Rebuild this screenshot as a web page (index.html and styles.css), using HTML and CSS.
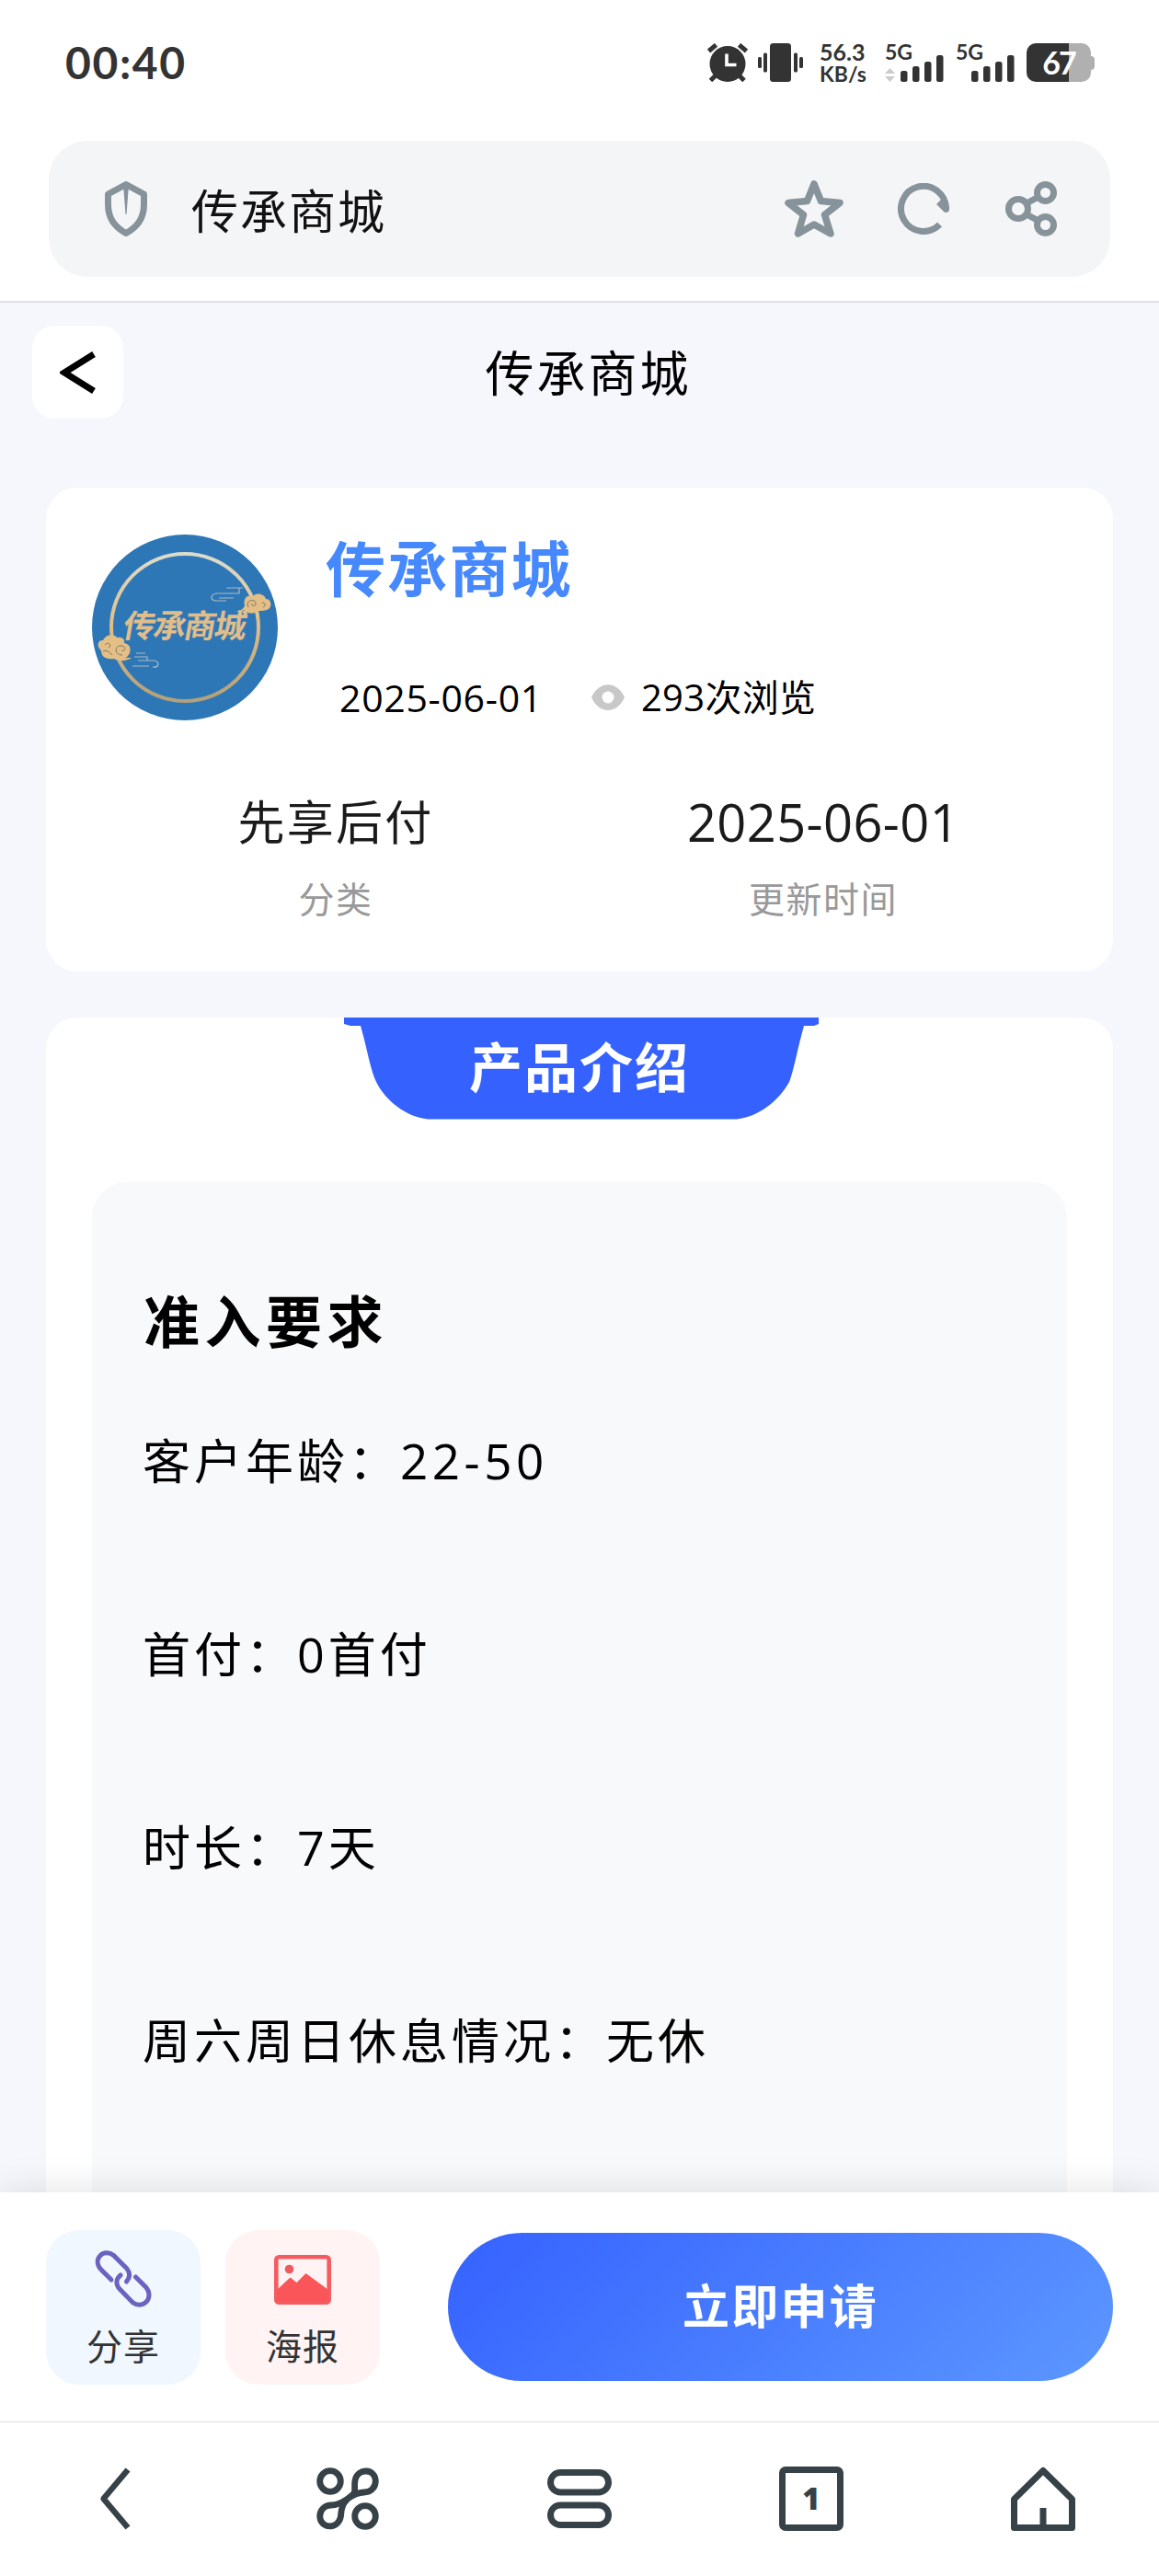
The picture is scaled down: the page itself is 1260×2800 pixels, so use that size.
FILE: index.html
```html
<!doctype html>
<html lang="zh-CN">
  <head>
    <meta charset="UTF-8" />
    <meta name="viewport" content="width=device-width, initial-scale=1.0" />
    <title>传承商城</title>
    <link rel="stylesheet" href="styles.css" />
  </head>
  <body>
    <div class="status-bar">
      <span class="clock">00:40</span>
      <div class="status-icons">
        <svg class="alarm" width="44" height="42" viewBox="0 0 44 42">
          <g fill="none" stroke="#333" stroke-width="5">
            <path d="M1.500 8.500 L9.500 1.800 M34.500 1.800 L42.500 8.500" />
            <path d="M9.500 34.500 L3.500 40.500 M34 34.500 L40 40.500" />
          </g>
          <circle cx="22" cy="22.500" r="19.500" fill="#333" />
          <path d="M21 11.500 V23.500 H31.500" fill="none" stroke="#fff" stroke-width="3.600" />
        </svg>
        <svg class="vibrate" width="50" height="42" viewBox="0 0 50 42" fill="#333">
          <rect x="13" y="0" width="23" height="42" rx="3.500" />
          <rect x="0" y="15" width="4" height="12" rx="1.500" />
          <rect x="6" y="10.500" width="4" height="21" rx="1.500" />
          <rect x="39" y="10.500" width="4" height="21" rx="1.500" />
          <rect x="45" y="15" width="4" height="12" rx="1.500" />
        </svg>
        <div class="speed"><span>56.3</span><span class="unit">KB/s</span></div>
        <div class="signal">
          <span class="net">5G</span>
          <svg width="64" height="42" viewBox="0 0 64 42" fill="#333">
            <path d="M0 33 L5.500 27 L11 33 Z M0 36 L5.500 42 L11 36 Z" fill="#ccc" />
            <rect x="17" y="30" width="7.500" height="12" rx="2.500" />
            <rect x="30" y="25" width="7.500" height="17" rx="2.500" />
            <rect x="43" y="20" width="7.500" height="22" rx="2.500" />
            <rect x="56" y="13" width="7.500" height="29" rx="2.500" />
          </svg>
        </div>
        <div class="signal second">
          <span class="net">5G</span>
          <svg width="64" height="42" viewBox="0 0 64 42" fill="#333">
            <rect x="17" y="30" width="7.500" height="12" rx="2.500" />
            <rect x="30" y="25" width="7.500" height="17" rx="2.500" />
            <rect x="43" y="20" width="7.500" height="22" rx="2.500" />
            <rect x="56" y="13" width="7.500" height="29" rx="2.500" />
          </svg>
        </div>
        <div class="battery">
          <div class="battery-body">67</div>
          <div class="battery-tip"></div>
        </div>
      </div>
    </div>

    <div class="address">
      <div class="address-box">
        <svg class="shield" width="46" height="60" viewBox="0 0 46 60">
          <path d="M23 3.500 L42.500 14 V25 C42.500 40 36 49 23 56.500 C10 49 3.500 40 3.500 25 V14 Z" fill="none" stroke="#87939a" stroke-width="7" stroke-linejoin="round" />
          <path d="M20 4 H26 L23.500 36 H22.500 Z" fill="#87939a" />
        </svg>
        <span class="address-title">传承商城</span>
        <svg class="star" width="64" height="62" viewBox="0 0 64 62">
          <path d="M32 4 L39.500 22.500 L60 24.500 L43.500 37.500 L50 58 L32 48 L14.500 58 L20.500 37.500 L4 24.500 L24.500 22.500 Z" fill="none" stroke="#87939a" stroke-width="7.500" stroke-linejoin="round" />
        </svg>
        <svg class="reload" width="56" height="56" viewBox="0 0 56 56">
          <path d="M45.500 45 A24.500 24.500 0 1 1 52.500 28" fill="none" stroke="#87939a" stroke-width="7" />
          <path d="M42 23 L49 16 C53 17 56 22 56 29 C55.500 32 52 33 50 31 Z" fill="#87939a" />
        </svg>
        <svg class="nodes" width="56" height="60" viewBox="0 0 56 60" fill="none" stroke="#87939a" stroke-width="7">
          <circle cx="14" cy="30" r="10.500" />
          <circle cx="43.500" cy="12.500" r="9" />
          <circle cx="43.500" cy="47.500" r="9" />
          <path d="M23 24 L36 17 M23 36 L36 43" />
        </svg>
      </div>
    </div>

    <main class="page">
      <header class="page-header">
        <button class="back-btn">
          <svg width="40" height="46" viewBox="0 0 40 46">
            <path d="M37 3 L5 23 L37 43" fill="none" stroke="#000" stroke-width="7" />
          </svg>
        </button>
        <h1>传承商城</h1>
      </header>

      <section class="card shop">
        <div class="shop-top">
          <svg class="shop-logo" width="202" height="202" viewBox="0 0 202 202">
            <defs>
              <linearGradient id="gold" x1="0" y1="0" x2="0" y2="1">
                <stop offset="0" stop-color="#dcdccb" />
                <stop offset="0.500" stop-color="#e0bd84" />
                <stop offset="1" stop-color="#b39f78" />
              </linearGradient>
            </defs>
            <circle cx="101" cy="101" r="101" fill="#2e77b6" />
            <circle cx="101" cy="101" r="80" fill="none" stroke="url(#gold)" stroke-width="4" />
            <!-- 右上祥云 -->
            <path d="M155 83 C160 84 165 81 166 77 C164 69 169 65 175 67 C179 62 188 65 189 70 C195 70 196 78 192 81 C186 84 182 82 180 84 C173 87 167 85 165 82 C162 84 158 84 155 83 Z" fill="#e3be86" />
            <path d="M170 79 C166 71 178 69 178 75 C178 79 173 78 174 75 M185 74 C189 74 189 78 186 79" fill="none" stroke="#7c7a60" stroke-width="1" />
            <path d="M164 58 H146 M137 64 H160 V58 M137 64 C128 64 128 72 135 72 H146 M138 69 H154" fill="none" stroke="#a9bcc0" stroke-width="1.200" />
            <!-- 左下祥云 -->
            <path d="M10 126 C4 121 7 114 12 115 C15 108 25 108 27 112 C33 111 36 114 35 118 C43 119 43 128 39 132 C37 135 32 134 43 134 C37 138 29 138 24 135 C17 136 10 134 10 126 Z" fill="#e3be86" />
            <path d="M33 131 C24 131 24 120 32 121 C38 122 36 128 32 126 M14 120 C18 116 22 120 18 123 M12 127 C16 125 19 128 22 131" fill="none" stroke="#7c7a60" stroke-width="1" />
            <path d="M48 129 H58 M46 133 H60 V137 H50 M60 137 H68 C74 138 73 145 66 144 M44 143 H62" fill="none" stroke="#a9bcc0" stroke-width="1.200" />
            <text class="logo-text" x="34" y="112" textLength="134" fill="#e0bd8a" transform="translate(18 0) skewX(-10)">传承商城</text>
          </svg>
          <div class="shop-info">
            <h2>传承商城</h2>
            <div class="shop-meta">
              <span>2025-06-01</span>
              <svg class="eye" width="36" height="28" viewBox="0 0 36 28">
                <path d="M0 14 C8 -4.500 28 -4.500 36 14 C28 32.500 8 32.500 0 14 Z" fill="#c8c8c8" />
                <circle cx="18" cy="14" r="6.500" fill="#fff" />
              </svg>
              <span class="views">293次浏览</span>
            </div>
          </div>
        </div>
        <div class="shop-stats">
          <div class="stat">
            <div class="stat-value">先享后付</div>
            <div class="stat-label">分类</div>
          </div>
          <div class="stat">
            <div class="stat-value date">2025-06-01</div>
            <div class="stat-label">更新时间</div>
          </div>
        </div>
      </section>

      <section class="card intro">
        <div class="ribbon">
          <svg class="ribbon-bg" width="518" height="112" viewBox="0 0 518 112">
            <path d="M1 0 H517 V7 L512 9 H501 L497 24 C493 40 489 60 485 70 C474 90 452 108 428 110.500 H92 C68 108 46 90 36 70 C31 60 27 40 23 24 L19 9 H8 L1 7 Z" fill="#3562ff" />
          </svg>
          <span>产品介绍</span>
        </div>
        <div class="intro-box">
          <h3>准入要求</h3>
          <p>客户年龄：<span class="range">22-50</span></p>
          <p>首付：0首付</p>
          <p>时长：7天</p>
          <p>周六周日休息情况：无休</p>
        </div>
      </section>
    </main>

    <footer class="action-bar">
      <button class="action share">
        <svg width="62" height="62" viewBox="0 0 62 62" fill="none" stroke="#6b63bf" stroke-width="5" stroke-linecap="round">
          <path d="M18 32 L6.500 20.500 C-3 9 10 -2.500 20.500 5.500 L35 20 C39 25 38 30 34.500 34" />
          <path d="M44.500 29 L56 40.500 C65 52 52 65 41 56.500 L27 42 C22.500 37 23 31 28 27" />
        </svg>
        <span>分享</span>
      </button>
      <button class="action poster">
        <svg width="62" height="54" viewBox="0 0 62 54">
          <rect x="2.300" y="2.300" width="57.400" height="49.400" rx="3" fill="none" stroke="#f45c60" stroke-width="4.600" />
          <circle cx="16.500" cy="15.500" r="4.800" fill="#ee5a5f" />
          <path d="M3 38 L17.500 24.500 L24.500 30 L34.500 20 L59 38 V51 H3 Z" fill="#fa5558" />
        </svg>
        <span>海报</span>
      </button>
      <button class="apply-btn">立即申请</button>
    </footer>

    <nav class="browser-nav">
      <a class="nav-item back">
        <svg width="34" height="68" viewBox="0 0 34 68">
          <path d="M31 2.500 L4.500 34 L31 65.500" fill="none" stroke="#374248" stroke-width="6.500" stroke-linejoin="round" />
        </svg>
      </a>
      <a class="nav-item">
        <svg width="68" height="68" viewBox="0 0 68 68" fill="none" stroke="#374248" stroke-width="6.800">
          <circle cx="15" cy="15" r="11.300" />
          <circle cx="53" cy="53" r="11.300" />
          <path d="M41.500 26.500 C42 22 41 20 42 14 C45 0 64 1 64.300 15 C64 23 58 27 52 27 C46 27 41 29 34 34 C30 38 27 42 26.500 53 C24 68 4 67 3.700 53 C4 45 10 41 16 41 C22 41 27 39 34 34 C38 31 41 28 41.500 26.500" stroke-linejoin="round" />
        </svg>
      </a>
      <a class="nav-item">
        <svg width="70" height="64" viewBox="0 0 70 64" fill="none" stroke="#374248" stroke-width="7">
          <rect x="3.500" y="3.500" width="63" height="21.500" rx="10.700" />
          <rect x="3.500" y="39" width="63" height="21.500" rx="10.700" />
        </svg>
      </a>
      <a class="nav-item"><span class="tab-count">1</span></a>
      <a class="nav-item">
        <svg width="70" height="70" viewBox="0 0 70 70" fill="none" stroke="#374248" stroke-width="7" stroke-linejoin="round">
          <path d="M35 4.500 L66.500 35.500 V66.500 H3.500 V35.500 Z" />
          <path d="M35 45 V66" />
        </svg>
      </a>
    </nav>
  </body>
</html>
```
FILE: styles.css
```css
* {
  box-sizing: border-box;
}

body {
  margin: 0;
  height: 2800px;
  display: flex;
  flex-direction: column;
  overflow: hidden;
  background-color: #fff;
  color: #000;
  font-family: "Open Sans", "Noto Sans CJK SC", sans-serif;
}

h1,
h2,
h3,
p {
  margin: 0;
}

button {
  border: none;
  padding: 0;
  font-family: inherit;
}

svg {
  display: block;
  flex: none;
}

/* 系统状态栏 */
.status-bar {
  height: 153px;
  flex: none;
  display: flex;
  justify-content: space-between;
  align-items: flex-start;
  padding: 47px 70px 0 71px;
  color: #333;
}

.clock {
  font-family: Lato, sans-serif;
  font-size: 48px;
  font-weight: 700;
  line-height: 42px;
  letter-spacing: 1.600px;
}

.status-icons {
  display: flex;
  height: 42px;
  font-family: Lato, sans-serif;
  font-weight: 700;
}

.vibrate {
  margin-left: 11px;
}

.speed {
  width: 51px;
  margin-left: 17px;
  display: flex;
  flex-direction: column;
  font-size: 25px;
  line-height: 24px;
  margin-top: -3px;
  white-space: nowrap;
}

.unit {
  font-size: 23px;
}

.signal {
  position: relative;
  margin-left: 20px;
}

.signal.second {
  margin-left: 13px;
}

.net {
  position: absolute;
  left: 0;
  top: -5px;
  font-size: 23px;
  line-height: 28px;
}

.battery {
  display: flex;
  align-items: center;
  margin-left: 13px;
}

.battery-body {
  width: 70px;
  height: 42px;
  border-radius: 10px;
  background: linear-gradient(to right, #333 46px, #b0b0b0 46px);
  color: #fff;
  font-size: 34px;
  font-weight: 700;
  line-height: 41px;
  text-align: center;
  letter-spacing: -2px;
}

.battery-tip {
  width: 4px;
  height: 15px;
  border-radius: 0 4px 4px 0;
  background-color: #b0b0b0;
}

/* 地址栏 */
.address {
  height: 176px;
  flex: none;
  padding: 0 53px;
  border-bottom: 2px solid #dfe0e4;
}

.address-box {
  height: 148px;
  display: flex;
  align-items: center;
  padding: 0 58px 0 61px;
  border-radius: 42px;
  background-color: #f4f5f7;
}

.address-title {
  flex: 1;
  margin-left: 48px;
  padding-top: 3px;
  font-size: 51px;
  line-height: 60px;
  letter-spacing: 2px;
  color: #111;
}

.reload {
  margin-left: 59px;
}

.nodes {
  margin-left: 61px;
}

/* 页面内容 */
.page {
  flex: 1;
  min-height: 0;
  overflow: hidden;
  padding: 0 50px;
  background-color: #f5f7fc;
}

.page-header {
  display: flex;
  align-items: center;
  height: 151px;
  margin: 0 -15px 50px;
}

.back-btn {
  width: 99px;
  height: 101px;
  display: flex;
  justify-content: center;
  align-items: center;
  border-radius: 24px;
  background-color: #fff;
}

.page-header h1 {
  flex: 1;
  padding: 0 80px 3px 0;
  text-align: center;
  font-size: 53px;
  font-weight: 400;
  letter-spacing: 3px;
}

.card {
  border-radius: 34px;
  background-color: #fff;
}

.shop {
  height: 526px;
  padding: 51px 50px 0;
}

.shop-top {
  display: flex;
}

.logo-text {
  font-family: "Noto Sans CJK SC", sans-serif;
  font-size: 35px;
  font-weight: 700;
}

.shop-info {
  margin-left: 52px;
}

.shop-info h2 {
  font-size: 65px;
  line-height: 74px;
  font-weight: 700;
  letter-spacing: 2.200px;
  color: #4688fd;
}

.shop-meta {
  display: flex;
  align-items: center;
  margin: 76px 0 0 15px;
  font-size: 41px;
  line-height: 54px;
  letter-spacing: 0.700px;
}

.eye {
  margin: 0 18px 0 53px;
}

.views {
  font-size: 40px;
  letter-spacing: 0.300px;
}

.shop-stats {
  display: flex;
  margin-top: 73px;
  text-align: center;
}

.stat {
  flex: 1;
}

.stat-value {
  font-size: 51px;
  line-height: 70px;
  letter-spacing: 2.300px;
  color: #1a1a1a;
}

.stat-value.date {
  font-size: 56px;
  letter-spacing: 0.400px;
}

.stat-label {
  margin-top: 24px;
  font-size: 39px;
  line-height: 50px;
  letter-spacing: 1.500px;
  color: #999;
}

.intro {
  margin-top: 50px;
  padding: 0 50px;
}

.ribbon {
  position: relative;
  width: 518px;
  height: 112px;
  margin: 0 auto;
  left: 2px;
  text-align: center;
  font-size: 58px;
  font-weight: 600;
  line-height: 108px;
  letter-spacing: 2px;
  color: #fff;
}

.ribbon-bg {
  position: absolute;
  left: 0;
  top: 0;
}

.ribbon span {
  position: relative;
  left: -2px;
}

.intro-box {
  height: 1300px;
  margin-top: 66px;
  padding: 108px 56px 0;
  border-radius: 40px;
  background-color: #f8f9fb;
}

.intro-box h3 {
  font-size: 61px;
  line-height: 90px;
  font-weight: 700;
  letter-spacing: 5.500px;
}

.intro-box p {
  height: 70px;
  margin: 71px 0 140px -1px;
  font-size: 52px;
  line-height: 70px;
  letter-spacing: 4px;
}

.intro-box p + p {
  margin-top: 0;
}

.range {
  font-size: 53px;
  letter-spacing: 4.500px;
}

/* 底部操作栏 */
.action-bar {
  position: relative;
  height: 249px;
  flex: none;
  display: flex;
  align-items: flex-start;
  padding: 41px 50px 0;
  background-color: #fff;
  box-shadow: 0 0 40px rgba(0, 0, 0, 0.12);
}

.action {
  width: 168px;
  height: 168px;
  display: flex;
  flex-direction: column;
  align-items: center;
  border-radius: 36px;
  font-size: 39px;
  line-height: 50px;
  letter-spacing: 1px;
  color: #333;
}

.share {
  padding-top: 22px;
  background-color: #f0f7ff;
}

.poster {
  margin-left: 27px;
  padding-top: 27px;
  background-color: #fff3f3;
}

.share span {
  margin-top: 17px;
}

.poster span {
  margin-top: 20px;
}

.apply-btn {
  flex: 1;
  height: 161px;
  margin: 3px 0 0 74px;
  padding-bottom: 8px;
  border-radius: 81px;
  background: linear-gradient(135deg, #3562ff, #5c97ff);
  color: #fff;
  font-size: 51px;
  font-weight: 600;
  letter-spacing: 2.300px;
}

/* 浏览器导航 */
.browser-nav {
  position: relative;
  height: 168px;
  flex: none;
  display: grid;
  grid-template-columns: repeat(5, 1fr);
  padding-bottom: 2px;
  border-top: 1px solid #dcdfe0;
  background-color: #fff;
}

.nav-item {
  display: flex;
  justify-content: center;
  align-items: center;
}

.nav-item.back {
  padding-right: 3px;
}

.tab-count {
  width: 70px;
  height: 70px;
  border: 7px solid #374248;
  border-radius: 7px;
  font-size: 33px;
  font-weight: 800;
  line-height: 56px;
  text-align: center;
  color: #374248;
}
```
